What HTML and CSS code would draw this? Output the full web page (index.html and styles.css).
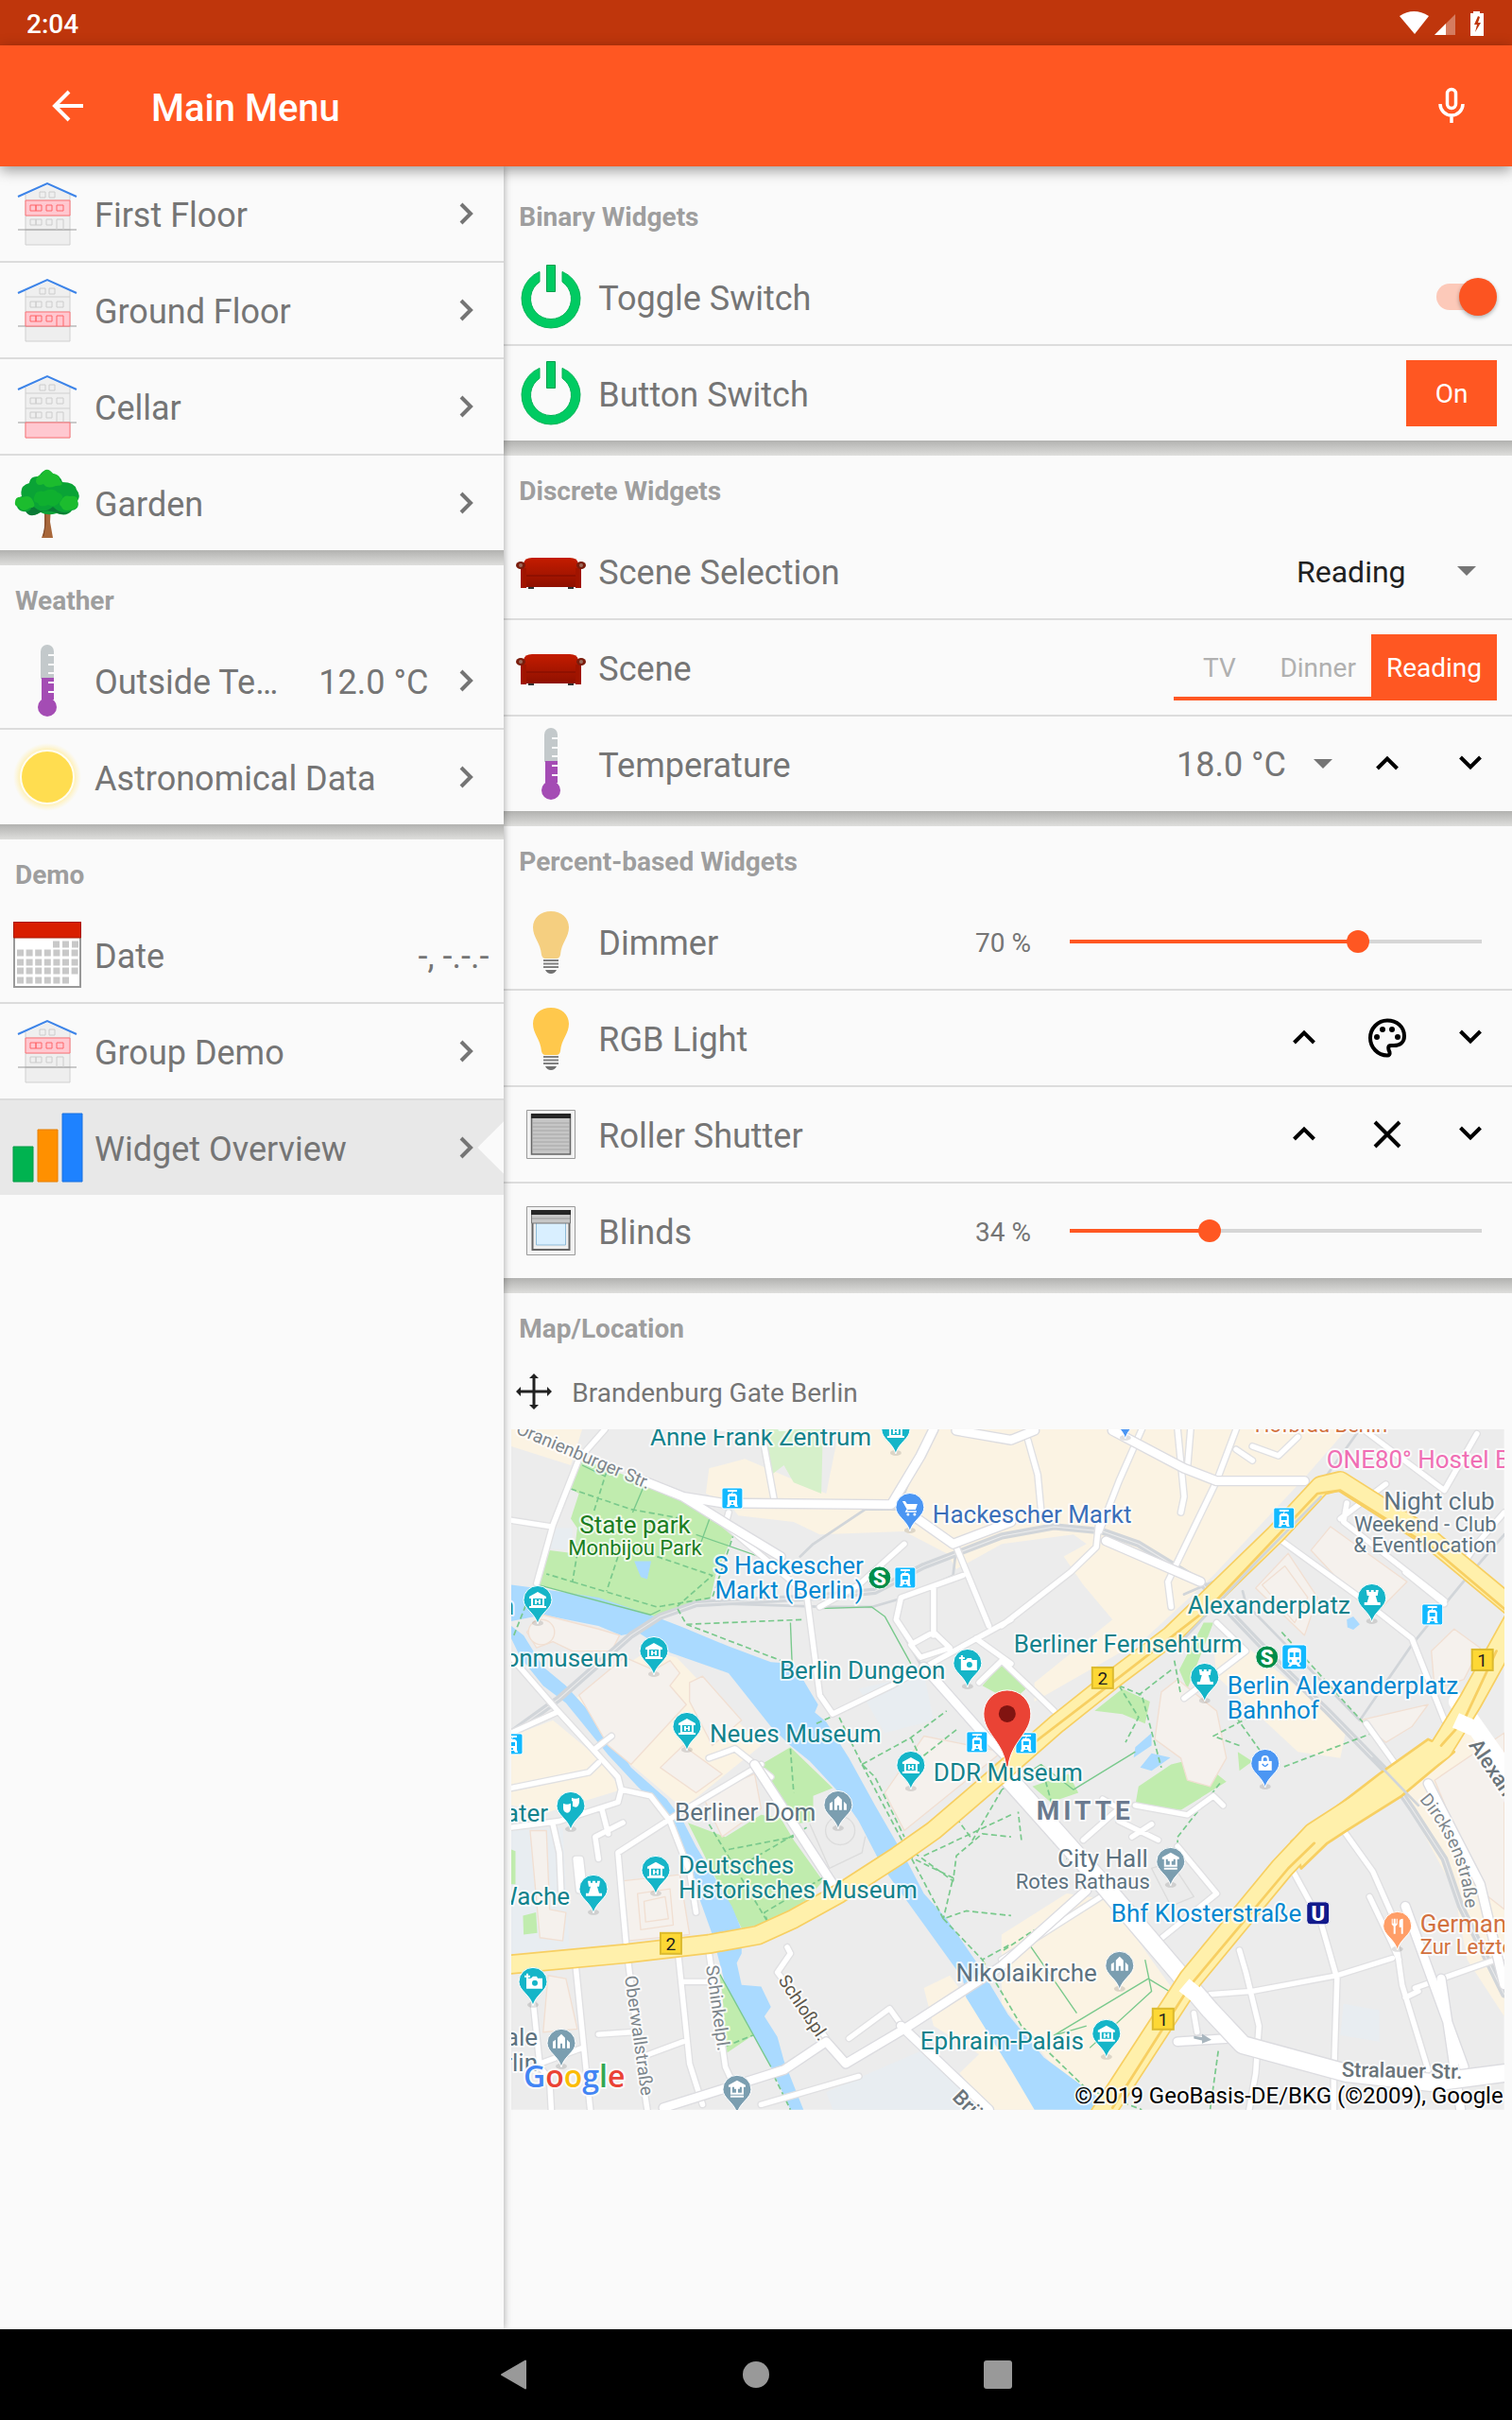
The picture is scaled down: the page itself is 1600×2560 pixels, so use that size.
FILE: index.html
```html
<!DOCTYPE html>
<html lang="en">
<head>
<meta charset="utf-8">
<meta name="viewport" content="width=device-width, initial-scale=1">
<title>Main Menu</title>
<link rel="stylesheet" href="styles.css">
</head>
<body>
<svg class="defs" aria-hidden="true">
  <defs>
    <linearGradient id="sofa-red" x1="0" y1="0" x2="0" y2="1"><stop offset="0" stop-color="#c41c00"/><stop offset="1" stop-color="#8e1000"/></linearGradient>
    <radialGradient id="sun-glow"><stop offset=".78" stop-color="#ffefb0"/><stop offset="1" stop-color="#fff3c4" stop-opacity="0"/></radialGradient>
    <symbol id="house" viewBox="0 0 80 80">
      <path d="M17 24V57H64V20L40 10L17 20Z" fill="#efefef"/>
      <path d="M17 57H64V73H17Z" fill="#eee" stroke="#d0d0d0"/>
      <path d="M17 20V57M64 20V57M17 26H64M17 42H64" fill="none" stroke="#cfcfcf"/>
      <path d="M9 57H71" stroke="#999" stroke-width="1"/>
      <path d="M32 17h6v6h-6zM42 17h6v6h-6zM22 31h6v6h-6zM28 31h6v6h-6zM39 31h6v6h-6zM50 31h7v6h-7zM22 46h6v6h-6zM28 46h6v6h-6zM39 46h6v6h-6zM50 57V46h7v11" fill="none" stroke="#ccc"/>
      <path d="M9 22L40 8L71 22" fill="none" stroke="#3d84e8" stroke-width="2"/>
    </symbol>
    <symbol id="house-first" viewBox="0 0 80 80">
      <use href="#house"/>
      <path d="M17 26H64V42H17Z" fill="#ffc8d0" stroke="#ff7478"/>
      <path d="M22 31h6v6h-6zM28 31h6v6h-6zM39 31h6v6h-6zM50 31h7v6h-7z" fill="none" stroke="#ff6468"/>
    </symbol>
    <symbol id="house-ground" viewBox="0 0 80 80">
      <use href="#house"/>
      <path d="M17 42H64V57H17Z" fill="#ffc8d0" stroke="#ff7478"/>
      <path d="M22 46h6v6h-6zM28 46h6v6h-6zM39 46h6v6h-6zM50 57V46h7v11" fill="none" stroke="#ff6468"/>
    </symbol>
    <symbol id="house-cellar" viewBox="0 0 80 80">
      <use href="#house"/>
      <path d="M17 57H64V73H17Z" fill="#ffc8d0" stroke="#ff7478"/>
    </symbol>
    <symbol id="tree" viewBox="0 0 80 80">
      <path d="M37 42H44L43 60L46 77H34L37 68Z" fill="#a8673a"/>
      <path d="M38 45V62L36 75" stroke="#7a4526" stroke-width="1" fill="none"/>
      <path d="M8 44Q4 36 13 33Q10 22 21 19Q22 11 31 12Q38 0 46 9Q54 11 56 18Q69 18 71 26Q76 32 72 38Q75 46 66 48Q61 55 50 51Q40 54 33 50Q24 56 18 49Q10 50 8 44Z" fill="#0aa336"/>
      <path d="M24 42Q34 54 46 44Q56 54 66 48Q58 55 49 50Q40 47 32 50Q22 57 17 49Q23 50 24 42Z" fill="#0a7a36"/>
      <path d="M28 17Q28 11 34 10Q39 0 46 9Q54 10 53 16Q60 22 49 22Q40 26 36 20Q29 23 28 17ZM6 39Q6 33 14 34Q22 31 25 38Q29 45 22 45Q14 51 10 44Q5 44 6 39ZM55 37Q58 31 64 33Q73 32 72 38Q74 46 66 47Q57 50 55 44Q51 41 55 37Z" fill="#1cbc2e"/>
      <path d="M26 34Q28 26 36 28Q46 23 51 29Q60 32 53 39Q48 46 41 42Q32 46 30 40Q24 39 26 34Z" fill="#0fb02f"/>
    </symbol>
    <symbol id="thermometer" viewBox="0 0 80 80">
      <path d="M33 9A7 7 0 0 1 47 9V38H33Z" fill="#c3c9cb"/>
      <path d="M34 37H47V60H34Z" fill="#a44cb4"/><circle cx="40" cy="68" r="10" fill="#a44cb4"/>
      <path d="M41 13H47M41 23H47M41 32H47M41 42H47M41 52H47" stroke="#fafafa" stroke-width="2"/>
    </symbol>
    <symbol id="sun" viewBox="0 0 80 80">
      <circle cx="40" cy="40" r="36" fill="url(#sun-glow)"/><circle cx="40" cy="40" r="28" fill="#ffdd50" stroke="#fffdf0" stroke-width="2"/>
    </symbol>
    <symbol id="calendar" viewBox="0 0 80 80">
      <path d="M5 6H75V74H5Z" fill="#fff" stroke="#999" stroke-width="2"/>
      <path d="M4 5H76V22H4Z" fill="#d81e00"/><path d="M4.500 5.500H75.500V22H4.500Z" fill="none" stroke="#a81800"/>
      <path d="M46 29H73" stroke="#c8c8c8" stroke-width="7" stroke-dasharray="7 3"/>
      <path d="M8 38H73M8 48H73M8 57H73" stroke="#c8c8c8" stroke-width="7" stroke-dasharray="7 2.600"/>
      <path d="M8 67H64" stroke="#c8c8c8" stroke-width="7" stroke-dasharray="7 2.600"/>
    </symbol>
    <symbol id="chart" viewBox="0 0 80 80">
      <path d="M4 39H25V76H4Z" fill="#00b350" stroke="#009a44"/><path d="M30 21H51V76H30Z" fill="#ff9000" stroke="#e67e00"/><path d="M56 4H77V76H56Z" fill="#1e82ff" stroke="#1870e0"/>
    </symbol>
    <symbol id="power" viewBox="0 0 80 80">
      <path d="M28 13.400A31 31 0 1 0 52 13.400V24.200A21.500 21.500 0 1 1 28 24.200Z" fill="#00cb62" stroke="#00b355"/>
      <path d="M35.500 6.500H44.500V34.500H35.500Z" fill="#00cb62" stroke="#009e4c"/>
    </symbol>
    <symbol id="sofa" viewBox="0 0 80 80">
      <path d="M16 57H22V59H16ZM58 57H64V59H58Z" fill="#333"/>
      <path d="M11 32Q12 26 20 26H60Q68 26 69 32V57H11Z" fill="url(#sofa-red)"/>
      <path d="M8 37H14V58H8ZM66 37H72V58H66Z" fill="#a01400"/>
      <path d="M14 45H66" stroke="#7c0d00"/>
      <ellipse cx="8" cy="34" rx="5" ry="4" fill="#7a1c0c"/><ellipse cx="72" cy="34" rx="5" ry="4" fill="#7a1c0c"/>
      <circle cx="8" cy="34" r="2" fill="#9a6a5c"/><circle cx="72" cy="34" r="2" fill="#9a6a5c"/>
    </symbol>
    <symbol id="bulb" viewBox="0 0 80 80">
      <path d="M40 8C51 8 59 15 59 25C59 36 51 41 50 54Q49 58 46 58H34Q31 58 30 54C29 41 21 36 21 25C21 15 29 8 40 8Z" fill="currentColor"/>
      <path d="M32 60H48M32 63.500H48M32 67H48" stroke="#808080" stroke-width="2"/><path d="M34 70H46Q44 74 40 74Q36 74 34 70Z" fill="#707070"/>
    </symbol>
    <symbol id="shutter" viewBox="0 0 80 80">
      <path d="M14.500 14.500H65.500V65.500H14.500Z" fill="#f2f2f2" stroke="#999"/>
      <path d="M19.500 19H60.500V61H19.500Z" fill="#c6c6c6" stroke="#666" stroke-width="1.500"/>
      <path d="M20 28H60M20 32H60M20 36H60M20 40H60M20 44H60M20 48H60M20 52H60M20 56H60" stroke="#a6a6a6"/>
      <path d="M19 18H61V23H19Z" fill="#262626"/>
    </symbol>
    <symbol id="blinds" viewBox="0 0 80 80">
      <path d="M14.500 14.500H65.500V65.500H14.500Z" fill="#f2f2f2" stroke="#999"/>
      <path d="M20.500 22H59.500V60H20.500Z" fill="#eee" stroke="#666" stroke-width="2"/>
      <path d="M24.500 30H55.500V55H24.500Z" fill="#d9efff" stroke="#8fbbd8"/>
      <path d="M19.500 22H60.500V32H19.500Z" fill="#c6c6c6" stroke="#777"/><path d="M20 27H60" stroke="#999"/>
      <path d="M19 18H61V23H19Z" fill="#262626"/>
    </symbol>
    <symbol id="next" viewBox="0 0 48 48"><path d="M19 14L29 24L19 34" fill="none" stroke="#757575" stroke-width="4"/></symbol>
    <symbol id="up" viewBox="0 0 48 48"><path d="M13.500 29L24 18.500L34.500 29" fill="none" stroke="#000" stroke-width="4"/></symbol>
    <symbol id="down" viewBox="0 0 48 48"><path d="M13.500 17L24 27.500L34.500 17" fill="none" stroke="#000" stroke-width="4"/></symbol>
    <symbol id="caret" viewBox="0 0 20 10"><path d="M0 0H20L10 10Z" fill="#757575"/></symbol>

    <symbol id="pin" viewBox="0 0 36 48" overflow="visible">
      <ellipse cx="18" cy="42" rx="6" ry="3" fill="#000" opacity=".12"/>
      <path d="M18 2.500A15 15 0 0 1 33 17.500C33 27 21 31 18 43C15 31 3 27 3 17.500A15 15 0 0 1 18 2.500Z" fill="currentColor" stroke="#fff" stroke-width="1"/>
    </symbol>
    <symbol id="pin-museum" viewBox="0 0 36 48" overflow="visible"><use href="#pin"/><path d="M18 9L27 14V16H9V14ZM11 16h2v7h10v-7h2v9H11ZM15 17h2v2h2v-2h2v5h-2v-2h-2v2h-2ZM9 24H27V26H9Z" fill="#fff"/></symbol>
    <symbol id="pin-hall" viewBox="0 0 36 48" overflow="visible"><use href="#pin"/><path d="M18 8L27 13V15H9V13ZM11 15h2v6h4v-4h-2v-2h6v2h-2v4h4v-6h2v8H11ZM11 24H25V26H11Z" fill="#fff"/></symbol>
    <symbol id="pin-church" viewBox="0 0 36 48" overflow="visible"><use href="#pin"/><path d="M18 8L22 12V23H19V18H17V23H14V12ZM9 16L12 14V23H9ZM24 14L27 17V23H24Z" fill="#fff"/></symbol>
    <symbol id="pin-tower" viewBox="0 0 36 48" overflow="visible"><use href="#pin"/><path d="M12 9h3v2h2V9h3v2h2V9h3l-1 6h-2l2 7h3v3H10v-3h3l2-7h-2Z" fill="#fff"/></symbol>
    <symbol id="pin-camera" viewBox="0 0 36 48" overflow="visible"><use href="#pin"/><path d="M11 14H16L18 12H22L23 14H28V25H11ZM11 9h2v2h2v2h-2v2h-2v-2H9v-2h2Z" fill="#fff"/><circle cx="20" cy="19" r="3" fill="currentColor"/></symbol>
    <symbol id="pin-masks" viewBox="0 0 36 48" overflow="visible"><use href="#pin"/><path d="M10 15Q14 17 18 15V21Q17 25 14 25Q10 24 10 20ZM19 9Q23 11 27 9V14Q26 19 23 19L20 18V13L19 12Z" fill="#fff"/></symbol>
    <symbol id="pin-cart" viewBox="0 0 36 48" overflow="visible"><use href="#pin"/><path d="M10 11H13L15 14H26L24 20H15Z" fill="#fff"/><path d="M15 20L14 22H25" stroke="#fff" stroke-width="1.500" fill="none"/><circle cx="16" cy="25" r="1.500" fill="#fff"/><circle cx="23" cy="25" r="1.500" fill="#fff"/></symbol>
    <symbol id="pin-bag" viewBox="0 0 36 48" overflow="visible"><use href="#pin"/><path d="M11 15H25V25H11Z" fill="#fff"/><path d="M15 15V13A3 3 0 0 1 21 13V15" stroke="#fff" stroke-width="2" fill="none"/><path d="M15 18Q18 23 21 18" fill="none" stroke="currentColor" stroke-width="1.500"/></symbol>
    <symbol id="pin-food" viewBox="0 0 36 48" overflow="visible"><use href="#pin"/><path d="M12 10h1v5h1v-5h2v5h1v-5h1v6l-2 2v8h-2v-8l-2-2ZM20 13Q20 10 24 10V26H22V19H20Z" fill="#fff"/></symbol>
    <symbol id="tram" viewBox="0 0 24 24" overflow="visible">
      <rect x="1" y="1" width="22" height="22" rx="2" fill="#12b9ff" stroke="#fff"/>
      <path d="M7 3H17V5H13L12 7H15L17 9V18L18 21H15L14 19H10L9 21H6L7 18V9L9 7H11L12 5H7Z" fill="#fff"/><path d="M9 10H15V14H9ZM11 16H13V18H11Z" fill="#12b9ff"/>
    </symbol>
    <symbol id="train" viewBox="0 0 28 28" overflow="visible">
      <rect x="1" y="1" width="26" height="26" rx="3" fill="#12b9ff" stroke="#fff"/>
      <path d="M7 7Q7 4 14 4Q21 4 21 7V19L19 21L21 24H18L16 22H12L10 24H7L9 21L7 19Z" fill="#fff"/><path d="M9 9H13V14H9ZM15 9H19V14H15Z" fill="#12b9ff"/><circle cx="10" cy="18" r="1.500" fill="#12b9ff"/><circle cx="18" cy="18" r="1.500" fill="#12b9ff"/>
    </symbol>
  </defs>
</svg>

<div class="screen">
  <div class="status">
    <span class="status-time">2:04</span>
    <svg class="status-icons" viewBox="0 0 92 28" aria-label="Wi-Fi, mobile signal, battery charging" role="img">
      <path d="M1 6Q16 -4 32 6L17 25Z" fill="#fff"/>
      <path d="M38 26L60 4V26Z" fill="#fff" opacity=".35"/><path d="M38 26L50 14V26Z" fill="#fff"/>
      <path d="M76 3H79V1H86V3H90V27H76Z" fill="#fff"/><path d="M84 6L80 15H83L81 23L87 13H84L86 7Z" fill="#bf360c"/>
    </svg>
  </div>

  <header class="bar">
    <button class="bar-button" type="button" aria-label="Back"><svg viewBox="0 0 48 48"><path d="M40 24H11M25 9L10 24L25 39" fill="none" stroke="#fff" stroke-width="4"/></svg></button>
    <h1>Main Menu</h1>
    <button class="bar-button" type="button" aria-label="Voice input"><svg viewBox="0 0 48 48"><path d="M24 6.500A4.500 4.500 0 0 1 28.500 11V22A4.500 4.500 0 0 1 19.500 22V11A4.500 4.500 0 0 1 24 6.500ZM12 22A12 12 0 0 0 36 22M24 34V42" fill="none" stroke="#fff" stroke-width="3.500"/></svg></button>
  </header>

  <div class="panes">
    <nav class="menu" aria-label="Sitemap">
      <ul class="group">
        <li><a class="row" href="#first-floor"><svg class="icon"><use href="#house-first"/></svg><span class="name">First Floor</span><svg class="next"><use href="#next"/></svg></a></li>
        <li><a class="row" href="#ground-floor"><svg class="icon"><use href="#house-ground"/></svg><span class="name">Ground Floor</span><svg class="next"><use href="#next"/></svg></a></li>
        <li><a class="row" href="#cellar"><svg class="icon"><use href="#house-cellar"/></svg><span class="name">Cellar</span><svg class="next"><use href="#next"/></svg></a></li>
        <li><a class="row" href="#garden"><svg class="icon"><use href="#tree"/></svg><span class="name">Garden</span><svg class="next"><use href="#next"/></svg></a></li>
      </ul>
      <h2>Weather</h2>
      <ul class="group">
        <li><a class="row" href="#outside"><svg class="icon"><use href="#thermometer"/></svg><span class="name">Outside Temperature</span><span class="value">12.0 °C</span><svg class="next"><use href="#next"/></svg></a></li>
        <li><a class="row" href="#astro"><svg class="icon"><use href="#sun"/></svg><span class="name">Astronomical Data</span><svg class="next"><use href="#next"/></svg></a></li>
      </ul>
      <h2>Demo</h2>
      <ul class="group group-last">
        <li><div class="row"><svg class="icon"><use href="#calendar"/></svg><span class="name">Date</span><span class="value">-, -.-.-</span></div></li>
        <li><a class="row" href="#group-demo"><svg class="icon"><use href="#house-first"/></svg><span class="name">Group Demo</span><svg class="next"><use href="#next"/></svg></a></li>
        <li><a class="row row-selected" href="#widgets" aria-current="page"><svg class="icon"><use href="#chart"/></svg><span class="name">Widget Overview</span><svg class="next"><use href="#next"/></svg></a></li>
      </ul>
    </nav>

    <main class="widgets">
      <h2>Binary Widgets</h2>
      <ul class="group">
        <li class="row"><svg class="icon"><use href="#power"/></svg><label class="name" for="toggle">Toggle Switch</label><input class="toggle" id="toggle" type="checkbox" checked></li>
        <li class="row"><svg class="icon"><use href="#power"/></svg><span class="name">Button Switch</span><button class="choice choice-on" type="button">On</button></li>
      </ul>
      <h2>Discrete Widgets</h2>
      <ul class="group">
        <li class="row"><svg class="icon"><use href="#sofa"/></svg><label class="name" for="scene">Scene Selection</label>
          <span class="picker"><select id="scene"><option>Reading</option><option>Dinner</option><option>TV</option></select><svg class="caret"><use href="#caret"/></svg></span></li>
        <li class="row"><svg class="icon"><use href="#sofa"/></svg><span class="name">Scene</span>
          <span class="choices"><button class="choice" type="button">TV</button><button class="choice" type="button">Dinner</button><button class="choice choice-on" type="button">Reading</button></span></li>
        <li class="row"><svg class="icon"><use href="#thermometer"/></svg><label class="name" for="temp">Temperature</label>
          <span class="picker picker-temp"><select id="temp"><option>18.0 °C</option><option>19.0 °C</option></select><svg class="caret"><use href="#caret"/></svg></span>
          <span class="actions"><button type="button" aria-label="Warmer"><svg><use href="#up"/></svg></button><button type="button" aria-label="Cooler"><svg><use href="#down"/></svg></button></span></li>
      </ul>
      <h2>Percent-based Widgets</h2>
      <ul class="group">
        <li class="row"><svg class="icon dim"><use href="#bulb"/></svg><label class="name" for="dimmer">Dimmer</label><span class="percent">70 %</span><input class="slider" id="dimmer" type="range" value="70" style="--level:70%"></li>
        <li class="row"><svg class="icon lit"><use href="#bulb"/></svg><span class="name">RGB Light</span>
          <span class="actions"><button type="button" aria-label="Brighter"><svg><use href="#up"/></svg></button><button type="button" aria-label="Pick colour"><svg viewBox="0 0 48 48"><path d="M24 5.500C34 5.500 42 12 42 22C42 29 37 32 31 32H28C24 32 25 36 26.500 39C27 41 26 42.500 24 42.500C14 42.500 6 34 6 24S14 5.500 24 5.500Z" fill="none" stroke="#000" stroke-width="4"/><circle cx="13" cy="23" r="3"/><circle cx="19" cy="15" r="3"/><circle cx="29" cy="15" r="3"/><circle cx="35" cy="23" r="3"/></svg></button><button type="button" aria-label="Darker"><svg><use href="#down"/></svg></button></span></li>
        <li class="row"><svg class="icon"><use href="#shutter"/></svg><span class="name">Roller Shutter</span>
          <span class="actions"><button type="button" aria-label="Open"><svg><use href="#up"/></svg></button><button type="button" aria-label="Stop"><svg viewBox="0 0 48 48"><path d="M11 11L37 37M37 11L11 37" stroke="#000" stroke-width="4"/></svg></button><button type="button" aria-label="Close"><svg><use href="#down"/></svg></button></span></li>
        <li class="row"><svg class="icon"><use href="#blinds"/></svg><label class="name" for="blinds-level">Blinds</label><span class="percent">34 %</span><input class="slider" id="blinds-level" type="range" value="34" style="--level:34%"></li>
      </ul>
      <h2>Map/Location</h2>
      <div class="place">
        <svg viewBox="0 0 40 40"><path d="M20 5V35M5 20H35" stroke="#212121" stroke-width="3"/><path d="M20 1L25 6H15ZM20 39L25 34H15ZM1 20L6 15V25ZM39 20L34 15V25Z" fill="#212121"/></svg>
        <span>Brandenburg Gate Berlin</span>
      </div>
      <svg class="map" viewBox="0 0 1051 720" preserveAspectRatio="xMidYMid slice" role="img" aria-label="Map of Berlin Mitte">
        <rect width="1051" height="720" fill="#ececec"/>
        <g transform="translate(-11 -12) scale(.3444 .3333)" fill="none" stroke-linejoin="round" stroke-linecap="round">
          <!-- built-up areas -->
          <path fill="#fbf3e3" d="M32 36H250L215 150L32 90ZM1040 36H2600L2470 190L2190 500L1980 700L1640 900V840L1880 640L1790 530L1730 440L1800 400L1760 370L1540 400L1400 480L1370 430L1240 360L980 370L900 330L730 310L700 270L630 240L640 160L750 130L1000 240ZM230 890L450 740L540 760L800 1040L560 1240L400 1100ZM32 1010L160 960L300 1080L370 1180L150 1250L32 1230ZM1539 1640L1739 1510L1869 1530L2069 1820L1830 2180L1700 2060L1539 1860ZM1300 1810L1380 1770L1430 1840L1700 2196H1500L1410 2080L1470 2020L1330 1930ZM2190 720L2260 700L2600 980L2580 1080L2450 1060L2200 820ZM2810 1140L3000 960L3084 1100V1900L2970 1720L2930 1500L2780 1210ZM32 1560L150 1540V1600L32 1610Z"/>
          <path fill="#e8edf1" d="M32 1310L190 1300L210 1680L32 1700ZM1000 2140L1290 2010L1480 2196H1020ZM160 350H220V420L150 415ZM1100 860L1300 810L1330 960L1180 1000ZM2590 1860L2700 1880V1980L2580 1960Z"/>
          <!-- parks -->
          <path fill="#c0ecae" d="M245 130L470 215L720 355L660 500L645 570L490 635L300 580L115 530L150 420L225 430L235 350L215 320L240 240L215 225ZM800 1100L890 1045L1020 1175L960 1200V1280L900 1290ZM575 1285L690 1330L800 1260L860 1270L900 1340L990 1470L940 1530L820 1605L740 1620L670 1480ZM670 1760L775 1960L695 2015L680 1820ZM1480 850L1540 780L1614 860L1570 900ZM1825 930L1910 860L1995 900L1980 970L1910 940ZM1634 1170L1745 1130L1775 1190L1690 1220ZM1960 1170L2060 1100L2140 1080L2230 1155L2090 1245L1950 1230ZM2085 800L2160 650L2190 650L2110 860ZM2265 1060L2310 1090L2270 1120ZM68 1580L108 1570L112 1635L70 1640ZM32 1370L45 1375V1480H32Z"/>
          <path fill="#d6f0ca" d="M810 36H990L985 240L900 205L870 150L820 190Z"/>
          <!-- water -->
          <path fill="#aadaff" d="M32 530L110 540L300 570L460 625L560 665L700 725L830 775L900 780L940 850L975 910L965 935L1000 965L1070 1080L1150 1230L1245 1400L1300 1510L1370 1590L1470 1740L1568 1910L1539 1870L1669 2030L1839 2160L1879 2196H1640L1568 2070L1430 1840L1420 1780L1190 1450L1160 1400L1100 1280L1040 1190L950 1090L890 1040L830 980L700 810L520 745L420 680L370 690L300 660L130 625L32 645ZM32 660L70 690L130 790L200 850L340 1010L400 1110L510 1210L560 1280L600 1360L710 1550L740 1625V1700L725 1730L740 1800L800 1805L830 1870L810 1900L850 1965L870 2040L930 2196H890L830 2060L690 1800L650 1640L570 1410L520 1270L420 1170L330 1070L200 905L130 850L60 760L32 700ZM410 455H462L450 512L430 505ZM1950 1045L2000 1000V1040L1945 1078ZM1965 1110L2000 1065L2058 1078L2000 1120ZM2600 640L2620 630L2640 655L2620 672L2602 665Z"/>
          <!-- buildings -->
          <g fill="#f5f1ed" stroke="#f1dfd2" stroke-width="4">
            <path d="M80 680L130 625L300 670L365 690L340 740L220 740L160 710L110 730ZM240 880L380 760L470 800L520 770L550 810L520 850L570 910L400 1100L330 1040ZM580 840L620 820L740 960L650 1040L580 900ZM490 1110L560 1040L680 1130L600 1190ZM620 1200L780 1130L800 1240L680 1330ZM370 1470L550 1450L580 1640L390 1660ZM90 1310H140L150 1560L200 1570L190 1660L120 1650ZM145 1770L200 1780L235 1940L130 1950ZM1180 1190L1300 1010L1540 1060L1240 1310ZM2030 870L2080 830L2200 930L2230 1080L2180 1170L2110 1150L2090 1080L2010 1020ZM2320 540L2420 430L2510 570L2470 690ZM2490 420L2550 345L2785 520L2680 630ZM2870 1150L3084 1000V1560L3010 1500ZM2860 740L2930 670L3010 730L2960 830L2870 860ZM2640 960L2850 910L2800 980L2720 1030Z"/>
            <path d="M420 1510L520 1495L530 1610L430 1625ZM440 1535L505 1520L515 1590L445 1600ZM2340 530L2410 470L2480 570L2440 650Z"/>
            <circle cx="125" cy="680" r="40"/>
          </g>
          <g stroke="#dcdcdc" stroke-width="4"><circle cx="1043" cy="1310" r="45"/><path d="M950 1290L1010 1430L1110 1380L1120 1330M2000 1430L2060 1410L2130 1520L2060 1550Z"/></g>
          <!-- railway -->
          <g stroke="#d1d5d9">
            <path stroke-width="22" d="M32 1000L180 890L400 690L490 630L600 590L950 570L1150 550L1300 470L1540 375L1700 345L1850 360L1960 400L2150 520L2400 790L2540 930L2720 1120L2800 1240L2900 1400L2950 1550L3084 1830"/>
            <path stroke-width="8" d="M700 590L1000 600L1140 600L1240 570L1390 500L1400 410M920 440L960 400L1120 290H1220L1320 36M1210 640L1300 800L1540 1080M2280 550L2290 590L2640 960L2800 720L2950 530L3084 370M2100 560L2300 470M2540 180L2640 36"/>
            <path stroke="#ececec" stroke-width="3" d="M32 1000L180 890L400 690L490 630L600 590L950 570L1150 550L1300 470L1540 375L1700 345L1850 360L1960 400L2150 520L2400 790L2540 930L2720 1120L2800 1240L2900 1400L2950 1550L3084 1830"/>
          </g>
          <!-- footpaths -->
          <g stroke="#79c98c" stroke-width="5" stroke-dasharray="18 10" stroke-linecap="butt">
            <path d="M215 225L400 290L560 320M325 170L285 300M240 400L220 520L140 495M360 440L325 550M220 520L480 600L650 570L720 355M480 440L650 500L540 600L570 655L930 640M570 655L860 770M40 690L90 560M970 970L1035 940L1110 1100L1150 1140L1240 1330M1110 1100L1260 1015L1370 930M1260 1015L1290 1080L1400 990M640 1290L820 1600M820 1600L810 1570L990 1460M740 1420L940 1300M700 1370L900 1330M890 1050L900 1190M1110 1100L1360 1590L1430 1565L1568 1580M1360 1590L1480 1720L1568 1670M1250 1390L1390 1460L1360 1590M1270 1380L1390 1470L1400 1390L1480 1320L1568 1330M1300 1390L1568 1260M1400 1270L1450 1340L1540 1180M1480 1720L1600 1930L1800 2130L1970 2196M2210 1160L2080 1330V1400M1900 850L1970 880L2030 1110M1900 850L1960 950L1920 1030M2070 770L2090 880M2060 800L1960 880M2400 680L2600 910L2680 1000L2400 1110M2260 950L2350 1080M2270 1040L2190 1010L2300 950M1590 1150L1700 1350M690 1995L775 1960M1660 1100L1740 1400M1600 1340L1590 1250M840 2090L890 2196M2205 2010L2180 2196M1545 1690L1640 1625"/>
            <path stroke-dasharray="none" stroke-width="4" d="M250 150L320 185M440 215L405 300M645 310L610 410M600 370L850 460M115 530L460 625L490 610M890 650L895 780M980 605L1140 600L1180 630L1260 780M670 1760L830 2060M1620 1665L1770 1890M1800 1930L1700 1960L1990 1780L2070 1830M1980 1720L2000 1820L1810 2000M1660 1100L1760 1180L1950 1060M1540 1180L1660 1100"/>
          </g>
          <!-- minor streets -->
          <g stroke="#e0e0e2" stroke-width="24">
            <path id="minor" d="M320 36L240 130L160 340L110 525M32 325L155 345M32 760L175 930L290 1060L360 1140L370 1180L460 1200L520 1280L580 1440L600 1570M32 1000L170 935M32 1175L270 1125L300 1095M32 1300L180 1280L360 1220L370 1180M800 1100L540 1260L360 1380L370 1500L385 1670L430 2060L450 2196M290 1050L340 1010M160 1290L180 1380L185 1500M240 1500L230 1400L245 1400L255 1490M300 1400L290 1330L375 1285M310 1240L330 1320M230 1740L260 2050L275 2196M545 1700L580 2050L620 2180M560 1790L640 1790M640 1700L690 2060L730 2150M430 2030L560 1980M300 1957L400 1950M100 1860L120 2060L150 2100L155 2196M120 2050L250 2000M640 1080L720 1050L830 1140M800 36L840 260M2080 36L2100 250L2090 300M1620 70L1650 180L1660 290M1840 360L1900 200L1970 36M2060 600L2050 520L2200 200L2260 36M2110 160L2120 36M2260 100L2310 135M2310 90L2390 120L2450 60M1840 310L1830 410L1750 490L1539 660M700 300L690 340L940 560L980 880L1020 940L1200 850L1480 690L1568 640M1400 410L1500 660M980 600L1100 530L1240 400M1260 720L1330 680L1380 730L1290 760ZM1420 500L1230 570L1215 640L1260 710M1330 540V690M1460 700L1568 780M1470 840L1540 770M1539 770L1640 870L1700 930M2100 890L2290 740L2200 650M2400 390L2640 570L2800 700L2900 960M2650 36L2900 230L3000 50M2580 320L2720 210M2600 270L2590 330L2900 580M2780 490L2900 590M2960 460L3000 400L3084 300M2660 970L2750 1100M1790 1340L1900 1240L1850 1210M1900 1280L2020 1340M1940 1330L2000 1290M1950 1230L2110 1260L2190 1200L2220 1230M2590 1310L2680 1440L2740 1580L2770 1800L2850 2070M2670 1520L2740 1670L2760 1720M2430 1430L2520 1600L2570 1780L2560 2100V2196M2180 1830L2310 1820L2570 1770L2740 1715M2810 1810L3084 1710M2780 1840L2820 1820M2270 1690L2290 1760L2330 1930L2320 2080L2300 2196M2080 1360L2200 1510L2020 1660M1539 1720L1860 1510M2130 1890L2140 1950M1070 1970L1195 1875L1240 1940M1000 1970L980 1940L850 1760L890 1700L880 1680M800 2180L1100 2090"/>
          </g>
          <use href="#minor" stroke="#fff" stroke-width="16"/>
          <!-- main streets -->
          <g stroke="#dcdce0" stroke-width="34"><path id="main" d="M440 200L560 250L680 270L1200 275L1290 120L1330 36M1400 40L1568 70L1640 40M560 250L700 340L860 440M1880 40L2100 160L2200 200L2470 200M1280 320L1390 400L1568 330M1240 1940L1539 1740L1800 1500M1230 1930L1500 2196M780 1100L1020 1480M500 2190L870 2070L1000 1980L1060 2050L1240 1940M1300 790L1480 1000L1568 1090M1860 390L2150 520M2080 1980L2240 1970M2850 1160L3010 1480L3084 1800M2890 1780L2950 2196M2780 1550L2960 2060"/></g>
          <use href="#main" stroke="#fff" stroke-width="26"/>
          <path stroke="#dcdce0" stroke-width="62" d="M1539 1120L1850 1480L2180 1880L2280 1990L2600 2080L2860 2110L3084 2080"/>
          <path stroke="#fff" stroke-width="54" d="M1539 1120L1850 1480L2180 1880L2280 1990L2600 2080L2860 2110L3084 2080M2940 900L3084 1110"/>
          <!-- federal roads -->
          <g stroke="#f7cf62" stroke-width="64"><path id="b2" d="M0 1738L390 1700L640 1670L790 1642L900 1590L1040 1510L1220 1390L1330 1310L1539 1125L1710 970L1880 830L2060 690L2180 570L2380 370L2520 215L2580 200L2840 370L3120 610"/></g>
          <g stroke="#f7cf62" stroke-width="76"><path id="b1" d="M3120 640L2980 900L2890 1050L2740 1160L2500 1320L2400 1430L2120 1780L1830 2240"/></g>
          <path id="b1-wide" fill="#fff0ab" stroke="#f7cf62" stroke-width="8" d="M2430 1345L2700 1130L2850 1020L2930 1060L2769 1200L2600 1310L2540 1350L2460 1430Z"/>
          <use href="#b2" stroke="#fff0ab" stroke-width="54"/>
          <use href="#b1" stroke="#fff0ab" stroke-width="66"/>
          <path stroke="#f7cf62" stroke-width="8" d="M1640 1030L1880 840L2180 600L2510 240L2580 230L2860 410L3100 620M3060 740L2960 960L2890 1040M2500 1350L2420 1430L2120 1800L1880 2190"/>
          <path stroke="#fff" stroke-width="50" stroke-linecap="butt" d="M2100 1800L2160 1850M2935 960L2990 985"/>
          <path stroke="#d1d5d9" stroke-width="8" d="M2680 1080L2820 1230M2100 700L2320 460M2320 460L2520 250"/>
          <path fill="#a9b6be" d="M2130 1962L2155 1966V1955L2184 1974L2155 1986V1976L2130 1970Z"/>
        </g>

        <g class="labels">
          <g class="teal">
            <text x="147" y="17">Anne Frank Zentrum</text><text class="end" x="3" y="196">n</text><text class="end" x="124" y="251">onmuseum</text>
            <text x="284" y="264">Berlin Dungeon</text><text x="210" y="331">Neues Museum</text><text x="447" y="372">DDR Museum</text>
            <text x="177" y="470">Deutsches</text><text x="177" y="496">Historisches Museum</text><text class="end" x="39" y="415">ater</text><text class="end" x="62" y="503">Wache</text>
            <text x="716" y="195">Alexanderplatz</text><text x="532" y="236">Berliner Fernsehturm</text><text class="end" x="606" y="656">Ephraim-Palais</text>
          </g>
          <g class="park"><text class="mid" x="131" y="110">State park</text><text class="mid small" x="131" y="133">Monbijou Park</text></g>
          <g class="blue"><text class="end" x="373" y="153">S Hackescher</text><text class="end" x="373" y="179">Markt (Berlin)</text><text x="758" y="280">Berlin Alexanderplatz</text><text x="758" y="306">Bahnhof</text><text x="635" y="521">Bhf Klosterstraße</text></g>
          <text class="shop" x="446" y="99">Hackescher Markt</text>
          <g class="grey">
            <text x="173" y="414">Berliner Dom</text><text class="end" x="674" y="463">City Hall</text><text class="end small" x="676" y="486">Rotes Rathaus</text><text class="end" x="620" y="584">Nikolaikirche</text>
            <text class="end" x="28" y="652">ale</text><text class="end" x="28" y="679">rlin</text>
            <text class="end" x="1041" y="85">Night club</text><text class="end small" x="1043" y="108">Weekend - Club</text><text class="end small" x="1043" y="130">&amp; Eventlocation</text>
          </g>
          <text class="district" x="556" y="413">MITTE</text>
          <text class="pink" x="863" y="41">ONE80° Hostel Berlin</text>
          <g class="food"><text class="small" x="787" y="3">Hofbräu Berlin</text><text x="962" y="532">German restaurant</text><text class="small" x="962" y="555">Zur Letzten Instanz</text></g>
          <g class="street">
            <text transform="translate(4 4) rotate(23)">Oranienburger Str.</text>
            <text transform="translate(120 579) rotate(82)">Oberwallstraße</text>
            <text transform="translate(206 568) rotate(82)">Schinkelpl.</text>
            <text class="dark" transform="translate(282 583) rotate(56)">Schloßpl.</text>
            <path id="dircksen" d="M961 392Q1002 440 1009 497L1012 530" fill="none" stroke="none"/>
            <text><textPath href="#dircksen">Dircksenstraße</textPath></text>
            <text class="bold" transform="translate(1013 334) rotate(56)">Alexanderstraße</text>
            <text class="bold" transform="translate(466 708) rotate(45)">Brüderstraße</text>
            <text class="bold" transform="translate(879 685) rotate(1)">Stralauer Str.</text>
          </g>
        </g>

        <g class="pin-teal">
          <use href="#pin-museum" x="389" y="-17" width="36" height="48"/><use href="#pin-museum" x="10" y="163" width="36" height="48"/><use href="#pin-museum" x="133" y="217" width="36" height="48"/>
          <use href="#pin-camera" x="465" y="230" width="36" height="48"/><use href="#pin-museum" x="168" y="297" width="36" height="48"/><use href="#pin-museum" x="405" y="338" width="36" height="48"/>
          <use href="#pin-masks" x="45" y="381" width="36" height="48"/><use href="#pin-museum" x="135" y="449" width="36" height="48"/><use href="#pin-tower" x="69" y="469" width="36" height="48"/>
          <use href="#pin-camera" x="5" y="567" width="36" height="48"/><use href="#pin-museum" x="612" y="622" width="36" height="48"/><use href="#pin-tower" x="893" y="161" width="36" height="48"/><use href="#pin-tower" x="716" y="245" width="36" height="48"/>
        </g>
        <g class="pin-grey">
          <use href="#pin-church" x="328" y="380" width="36" height="48"/><use href="#pin-church" x="35" y="632" width="36" height="48"/><use href="#pin-hall" x="221" y="681" width="36" height="48"/><use href="#pin-hall" x="680" y="440" width="36" height="48"/><use href="#pin-church" x="626" y="550" width="36" height="48"/>
        </g>
        <g class="pin-blue"><use href="#pin-cart" x="404" y="65" width="36" height="48"/><use href="#pin-bag" x="780" y="336" width="36" height="48"/><use href="#pin" x="632" y="-33" width="36" height="48"/></g>
        <g class="pin-orange"><use href="#pin-food" x="920" y="508" width="36" height="48"/></g>

        <use href="#tram" x="222" y="61" width="24" height="24"/><use href="#tram" x="405" y="145" width="24" height="24"/><use href="#tram" x="-11" y="321" width="24" height="24"/><use href="#tram" x="481" y="319" width="24" height="24"/><use href="#tram" x="533" y="320" width="24" height="24"/><use href="#tram" x="806" y="82" width="24" height="24"/><use href="#tram" x="963" y="184" width="24" height="24"/><use href="#train" x="815" y="227" width="28" height="28"/>
        <g class="badge">
          <circle cx="390" cy="157" r="12" fill="#008d4a" stroke="#fff"/><text x="390" y="165">S</text>
          <circle cx="800" cy="241" r="12" fill="#008d4a" stroke="#fff"/><text x="800" y="249">S</text>
          <rect x="842" y="500" width="24" height="24" rx="4" fill="#121a8c" stroke="#fff"/><text x="854" y="520">U</text>
        </g>
        <g class="shield">
          <rect x="615" y="252" width="22" height="22"/><text x="626" y="270">2</text>
          <rect x="1017" y="233" width="22" height="22"/><text x="1028" y="251">1</text>
          <rect x="158" y="533" width="22" height="22"/><text x="169" y="551">2</text>
          <rect x="679" y="613" width="22" height="22"/><text x="690" y="631">1</text>
        </g>
        <path d="M525 276A25 25 0 0 1 550 301C550 322 529 330 526 357H524C521 330 500 322 500 301A25 25 0 0 1 525 276Z" fill="#ea4335" stroke="#fff"/><circle cx="525" cy="301" r="9" fill="#811411"/>
        <text class="google" x="13" y="696"><tspan fill="#4285f4">G</tspan><tspan fill="#ea4335">o</tspan><tspan fill="#fbbc05">o</tspan><tspan fill="#4285f4">g</tspan><tspan fill="#34a853">l</tspan><tspan fill="#ea4335">e</tspan></text>
        <text class="credit" x="1050" y="713">©2019 GeoBasis-DE/BKG (©2009), Google</text>
      </svg>
    </main>
  </div>

  <div class="navbar">
    <button type="button" aria-label="Back"><svg viewBox="0 0 32 32"><path d="M28 1.500V30.500L3 16Z" fill="#999" stroke="#999" stroke-width="2" stroke-linejoin="round"/></svg></button>
    <button type="button" aria-label="Home"><svg viewBox="0 0 32 32"><circle cx="16" cy="16" r="14" fill="#999"/></svg></button>
    <button type="button" aria-label="Recent apps"><svg viewBox="0 0 32 32"><rect x="1" y="1" width="30" height="30" rx="3" fill="#999"/></svg></button>
  </div>
</div>
</body>
</html>
```
FILE: styles.css
```css
* { box-sizing: border-box; }
body { margin: 0; background: #fafafa; color: #757575; font: 36px/44px Roboto, sans-serif; }
ul { list-style: none; margin: 0; padding: 0; }
a { color: inherit; text-decoration: none; }
button, select { font: inherit; color: inherit; background: none; border: 0; margin: 0; padding: 0; border-radius: 0; }
svg { display: block; }
.defs { position: absolute; width: 0; height: 0; }

.screen { display: flex; flex-direction: column; min-height: 100vh; }

.status { display: flex; justify-content: space-between; align-items: center; height: 48px; padding: 2px 28px 0; background: #bf360c; color: #fff; font-size: 28px; font-weight: 500; line-height: 32px; }
.status-time { padding-top: 2px; }
.status-icons { width: 92px; height: 28px; }

.bar { position: relative; z-index: 2; display: flex; align-items: center; height: 128px; padding: 0 40px 0 48px; background: #ff5722; color: #fff; box-shadow: 0 4px 14px rgba(0, 0, 0, .4); }
.bar h1 { flex: 1; margin: 0; padding: 6px 0 0 64px; font-size: 40px; font-weight: 500; line-height: 48px; }
.bar-button svg { width: 48px; height: 48px; }

.panes { flex: 1; display: grid; grid-template-columns: 1fr 2fr; }
.menu { position: relative; z-index: 1; min-width: 0; background: #fafafa; box-shadow: 0 0 8px rgba(0, 0, 0, .35); }
.widgets { min-width: 0; padding-top: 16px; }

h2 { margin: 0; height: 72px; padding: 4px 16px 0; font-size: 28px; font-weight: 700; line-height: 68px; color: #9e9e9e; }

.group::after { content: ""; display: block; height: 16px; background: linear-gradient(#b2b2b0, #dededc); }
.group-last::after { display: none; }
.group > li + li { border-top: 2px solid #dcdcdc; }
.row { display: flex; align-items: center; height: 100px; padding: 0 16px 0 10px; }
.group > li + li.row { height: 102px; }
.icon { flex: none; width: 80px; height: 80px; margin-right: 10px; }
.name { flex: 1; min-width: 0; overflow: hidden; white-space: nowrap; text-overflow: ellipsis; padding-top: 4px; }
.value { margin-left: 40px; padding-top: 4px; white-space: nowrap; }
.next { flex: none; width: 48px; height: 48px; margin-left: 16px; }
.row-selected { position: relative; background: #e8e8e8; }
.row-selected::after { content: ""; position: absolute; right: 0; top: 22px; width: 28px; height: 56px; background: #fafafa; clip-path: polygon(100% 0, 0 50%, 100% 100%); }
.dim { color: #f5cf80; }
.lit { color: #ffc84c; }

.toggle { position: relative; appearance: none; width: 64px; height: 40px; margin: 0; }
.toggle::before { content: ""; position: absolute; left: 0; top: 6px; width: 56px; height: 28px; border-radius: 14px; background: #fcc9b9; }
.toggle::after { content: ""; position: absolute; right: 0; top: 0; width: 40px; height: 40px; border-radius: 50%; background: #fc5421; box-shadow: 0 2px 4px rgba(0, 0, 0, .3); }

.choices { display: flex; }
.choice { min-width: 96px; height: 70px; padding: 6px 16px 0; border-bottom: 4px solid #ff5722; font-size: 28px; line-height: 32px; color: #b0b0b0; }
.choice-on { background: #ff5722; color: #fff; }

.picker { display: grid; align-items: center; width: 212px; font-size: 32px; color: #212121; }
.picker select { grid-area: 1 / 1; appearance: none; height: 60px; padding-top: 2px; }
.picker .caret { grid-area: 1 / 1; justify-self: end; width: 20px; height: 10px; margin-right: 22px; pointer-events: none; }
.picker-temp { width: 179px; font-size: 36px; color: #757575; }
.picker-temp .caret { margin-right: 14px; }

.actions { display: flex; margin-right: -16px; }
.actions button { display: grid; place-items: center; width: 88px; height: 88px; }
.actions svg { width: 48px; height: 48px; }

.percent { margin-right: 29px; padding-top: 4px; font-size: 28px; }
.slider { appearance: none; width: 460px; height: 48px; margin: 0 4px 0 0; background: linear-gradient(90deg, #ff5722 var(--level), #d6d6d6 0) center / calc(100% - 24px) 4px no-repeat; }
.slider::-webkit-slider-thumb { appearance: none; width: 24px; height: 24px; border-radius: 50%; background: #ff5722; }

.place { display: flex; align-items: center; gap: 20px; height: 72px; padding: 0 12px 8px; font-size: 28px; }
.place svg { width: 40px; height: 40px; }
.place span { padding-top: 4px; }

.map { width: calc(100% - 16px); height: auto; aspect-ratio: 1051 / 720; margin: 0 8px; overflow: hidden; }
.map text { paint-order: stroke; stroke: rgba(255, 255, 255, .75); stroke-width: 4px; stroke-linejoin: round; }
.labels { font-size: 26px; }
.labels .small { font-size: 22px; }
.labels .end { text-anchor: end; }
.labels .mid { text-anchor: middle; }
.teal { fill: #12828c; }
.park { fill: #1b7d22; }
.blue { fill: #0288d1; }
.shop { fill: #3b6fba; }
.grey { fill: #5d7280; }
.pink { fill: #f06eb4; }
.food { fill: #d2713f; }
.labels .district { fill: #6b7a8f; font-size: 28px; font-weight: 700; letter-spacing: 4px; }
.street { fill: #7d868c; font-size: 19px; }
.street .dark { fill: #5e584c; }
.street .bold { fill: #6a747a; font-size: 22px; font-weight: 500; }
.pin-teal { color: #15b5c8; }
.pin-grey { color: #7b9eb0; }
.pin-blue { color: #4b96f3; }
.pin-orange { color: #ff9e67; }
.map .badge text { fill: #fff; stroke: none; font-size: 22px; font-weight: 900; text-anchor: middle; }
.shield rect { fill: #fdd835; stroke: #dcba2d; stroke-width: 2px; }
.map .shield text { fill: #212121; stroke: none; font-size: 19px; text-anchor: middle; }
.map .google { font: 600 32px "Open Sans", sans-serif; stroke: #fafafa; }
.map .credit { fill: #000; font-size: 24px; text-anchor: end; }

.navbar { display: flex; justify-content: center; align-items: center; gap: 224px; height: 96px; background: #000; }
.navbar svg { width: 32px; height: 32px; }
```
